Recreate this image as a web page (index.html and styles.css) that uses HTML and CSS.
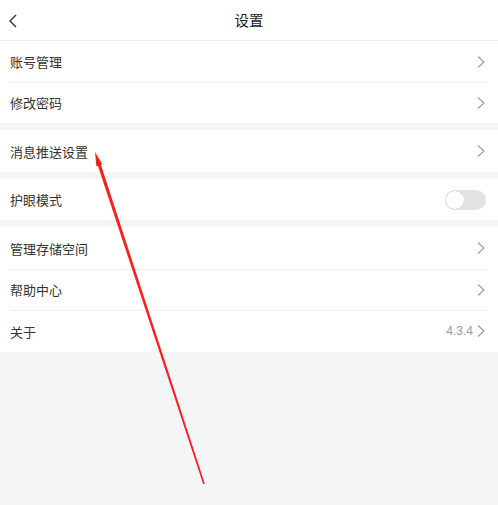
FILE: index.html
```html
<!DOCTYPE html>
<html lang="zh">
<head>
<meta charset="utf-8">
<link rel="stylesheet" href="styles.css">
</head>
<body>
<div class="page">
  <header class="nav">
    <svg class="back" width="10" height="14" viewBox="0 0 10 14"><path d="M8 1 L2 7 L8 13" fill="none" stroke="#333" stroke-width="1.4"/></svg>
    <div class="title">设置</div>
  </header>
  <section class="group">
    <div class="row"><span class="label">账号管理</span><svg class="chev" width="8" height="12" viewBox="0 0 8 12"><path d="M1 0.5 L7 6 L1 11.5" fill="none" stroke="#9a9a9a" stroke-width="1.1"/></svg></div>
    <div class="row"><span class="label">修改密码</span><svg class="chev" width="8" height="12" viewBox="0 0 8 12"><path d="M1 0.5 L7 6 L1 11.5" fill="none" stroke="#9a9a9a" stroke-width="1.1"/></svg></div>
  </section>
  <section class="group">
    <div class="row tall"><span class="label">消息推送设置</span><svg class="chev" width="8" height="12" viewBox="0 0 8 12"><path d="M1 0.5 L7 6 L1 11.5" fill="none" stroke="#9a9a9a" stroke-width="1.1"/></svg></div>
  </section>
  <section class="group">
    <div class="row"><span class="label">护眼模式</span><span class="toggle"><span class="knob"></span></span></div>
  </section>
  <section class="group">
    <div class="row tall"><span class="label">管理存储空间</span><svg class="chev" width="8" height="12" viewBox="0 0 8 12"><path d="M1 0.5 L7 6 L1 11.5" fill="none" stroke="#9a9a9a" stroke-width="1.1"/></svg></div>
    <div class="row"><span class="label">帮助中心</span><svg class="chev" width="8" height="12" viewBox="0 0 8 12"><path d="M1 0.5 L7 6 L1 11.5" fill="none" stroke="#9a9a9a" stroke-width="1.1"/></svg></div>
    <div class="row tall"><span class="label">关于</span><span class="right"><span class="version">4.3.4</span><svg class="chev" width="8" height="12" viewBox="0 0 8 12"><path d="M1 0.5 L7 6 L1 11.5" fill="none" stroke="#9a9a9a" stroke-width="1.1"/></svg></span></div>
  </section>
  <svg class="arrow" width="498" height="505" viewBox="0 0 498 505">
    <polygon fill="#ff1c1c" points="95,152 102.4,164.4 100.9,164.8 204.8,483.8 203.2,484.2 97.9,165.8 96.4,166.3"/>
  </svg>
</div>
</body>
</html>
```

FILE: styles.css
```css
* { box-sizing: border-box; }
html, body { margin: 0; padding: 0; }
body {
  background: #f4f5f7;
  font-family: "Noto Sans CJK SC", "Noto Sans", sans-serif;
  color: #333;
}
.page {
  position: relative;
  width: 498px;
  height: 505px;
  overflow: hidden;
}
.nav {
  height: 41px;
  background: #fff;
  border-bottom: 1px solid #efefef;
  display: flex;
  align-items: center;
  justify-content: center;
  position: relative;
}
.back {
  position: absolute;
  left: 8px;
  top: 14px;
}
.title {
  font-size: 14.5px;
  color: #222;
  line-height: 1;
}
.group {
  background: #fff;
  margin-bottom: 7px;
}
.row {
  height: 41px;
  margin-left: 10px;
  padding-right: 13px;
  margin-right: 0;
  display: flex;
  align-items: center;
  justify-content: space-between;
  position: relative;
}
.row.tall { height: 42px; }
.row + .row::before {
  content: "";
  position: absolute;
  left: 0;
  right: 10px;
  top: 0;
  height: 1px;
  background: #f0f0f0;
}
.label {
  font-size: 13px;
  color: #333;
  line-height: 1;
}
.chev { display: block; }
.right {
  display: flex;
  align-items: center;
  gap: 4px;
}
.version {
  font-family: "Liberation Sans", Arial, sans-serif;
  font-size: 12px;
  color: #9b9b9b;
  line-height: 1;
}
.toggle {
  width: 41px;
  height: 20px;
  border-radius: 10px;
  background: #e3e3e3;
  position: relative;
  margin-right: -1px;
}
.knob {
  position: absolute;
  left: 1px;
  top: 1px;
  width: 18px;
  height: 18px;
  border-radius: 50%;
  background: #fff;
  box-shadow: 0 0 0 0.6px #d4d4d4;
}
.arrow {
  position: absolute;
  left: 0;
  top: 0;
  pointer-events: none;
}
```
